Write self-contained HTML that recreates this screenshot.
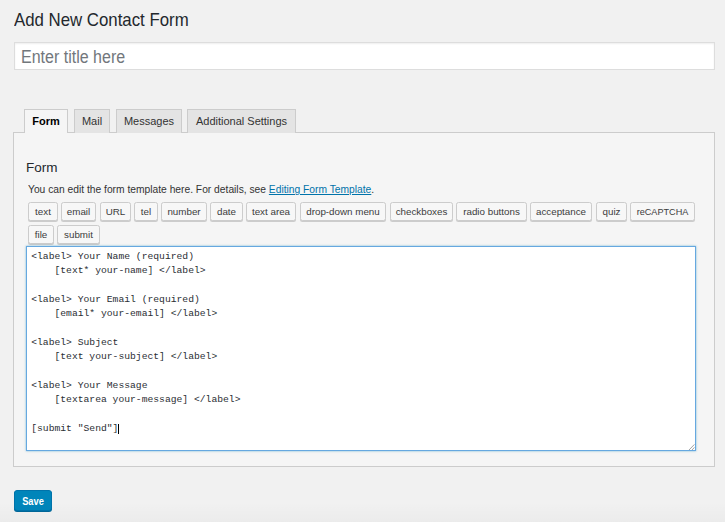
<!DOCTYPE html>
<html>
<head>
<meta charset="utf-8">
<style>
html,body{margin:0;padding:0;}
body{width:725px;height:522px;overflow:hidden;background:#f1f1f1;position:relative;font-family:"Liberation Sans",sans-serif;color:#23282d;}
.abs{position:absolute;white-space:nowrap;}
#h1{left:13.5px;top:10px;font-size:17.8px;line-height:20px;color:#23282d;transform:scaleX(0.945);transform-origin:0 0;}
#title{left:14px;top:42px;width:699px;height:26px;background:#fff;border:1px solid #ddd;box-shadow:inset 0 1px 2px rgba(0,0,0,.07);}
#ph{left:21px;top:46.5px;font-size:17.5px;line-height:20px;color:#72777c;transform:scaleX(0.915);transform-origin:0 0;}
.tab{position:absolute;top:109px;height:24px;border:1px solid #ccc;border-bottom:none;background:#e4e4e4;box-sizing:border-box;}
.tab span{position:absolute;left:0;right:0;top:4.5px;text-align:center;font-size:11px;line-height:13px;color:#333;}
#panel{left:13px;top:132px;width:700px;height:333px;border:1px solid #ccc;background:#f5f5f5;}
.tab.active{background:#f5f5f5;height:24px;z-index:2;}
.tab.active span{color:#000;font-weight:bold;}
#h2{left:26px;top:160.2px;font-size:13.5px;line-height:16px;color:#23282d;}
#desc{left:28.3px;top:184.3px;font-size:10px;line-height:12px;color:#333;transform:scaleX(1.026);transform-origin:0 0;}
#desc a{color:#0073aa;text-decoration:underline;}
.btn{position:absolute;height:19px;box-sizing:border-box;border:1px solid #ccc;border-radius:2.5px;background:#f7f7f7;box-shadow:0 1px 0 #ccc;}
.btn span{position:absolute;left:0;right:0;top:3px;text-align:center;font-size:9.8px;line-height:11px;color:#3c3c3c;}
#ta{left:26px;top:246px;width:668px;height:203px;background:#fff;border:1px solid #66a8e0;box-shadow:0 0 2px rgba(30,140,190,.6);}
#code{left:31.2px;top:250px;font-family:"Liberation Mono",monospace;font-size:9.7px;line-height:14.34px;color:#2a2e33;white-space:pre;}
#save{left:14px;top:490px;width:38px;height:21px;box-sizing:border-box;background:#0085ba;border:1px solid #0073aa;border-radius:3px;box-shadow:0 1px 0 #006799;}
#save span{position:absolute;left:0;right:0;top:3.8px;text-align:center;font-size:10.5px;line-height:12px;color:#fff;font-weight:bold;transform:scaleX(0.885);}
</style>
</head>
<body>
<div class="abs" id="h1">Add New Contact Form</div>
<div class="abs" id="title"></div>
<div class="abs" id="ph">Enter title here</div>

<div class="abs" id="panel"></div>
<div class="tab active" style="left:24px;width:44px;"><span>Form</span></div>
<div class="tab" style="left:74px;width:36px;"><span>Mail</span></div>
<div class="tab" style="left:116px;width:66px;"><span>Messages</span></div>
<div class="tab" style="left:187px;width:109px;"><span>Additional Settings</span></div>

<div class="abs" id="h2">Form</div>
<div class="abs" id="desc">You can edit the form template here. For details, see <a>Editing Form Template</a>.</div>

<div class="btn" style="left:28px;top:202px;width:30px;"><span>text</span></div>
<div class="btn" style="left:61px;top:202px;width:35px;"><span>email</span></div>
<div class="btn" style="left:100px;top:202px;width:31px;"><span>URL</span></div>
<div class="btn" style="left:134px;top:202px;width:24px;"><span>tel</span></div>
<div class="btn" style="left:161px;top:202px;width:46px;"><span>number</span></div>
<div class="btn" style="left:210px;top:202px;width:33px;"><span>date</span></div>
<div class="btn" style="left:246px;top:202px;width:50px;"><span>text area</span></div>
<div class="btn" style="left:300px;top:202px;width:86px;"><span>drop-down menu</span></div>
<div class="btn" style="left:390px;top:202px;width:63px;"><span>checkboxes</span></div>
<div class="btn" style="left:456px;top:202px;width:71px;"><span>radio buttons</span></div>
<div class="btn" style="left:530px;top:202px;width:62px;"><span>acceptance</span></div>
<div class="btn" style="left:596px;top:202px;width:31px;"><span>quiz</span></div>
<div class="btn" style="left:630px;top:202px;width:65px;"><span style="transform:scaleX(0.93)">reCAPTCHA</span></div>
<div class="btn" style="left:28px;top:225px;width:26px;"><span>file</span></div>
<div class="btn" style="left:57px;top:225px;width:43px;"><span>submit</span></div>

<div class="abs" id="ta"></div>
<div class="abs" id="code">&lt;label&gt; Your Name (required)
    [text* your-name] &lt;/label&gt;

&lt;label&gt; Your Email (required)
    [email* your-email] &lt;/label&gt;

&lt;label&gt; Subject
    [text your-subject] &lt;/label&gt;

&lt;label&gt; Your Message
    [textarea your-message] &lt;/label&gt;

[submit "Send"]<span style="display:inline-block;width:1px;height:10px;background:#000;vertical-align:-2.5px;"></span></div>
<svg class="abs" style="left:686px;top:442px;" width="10" height="10" viewBox="0 0 10 10"><path d="M3 8 L8.4 2.4 M6 8 L8.4 5.4" stroke="#999" stroke-width="0.9" fill="none"/></svg>

<div class="abs" id="save"><span>Save</span></div>
<div class="abs" style="left:0;top:502px;width:725px;height:20px;background:linear-gradient(rgba(0,0,0,0),rgba(0,0,0,0.025));pointer-events:none;"></div>
</body>
</html>
